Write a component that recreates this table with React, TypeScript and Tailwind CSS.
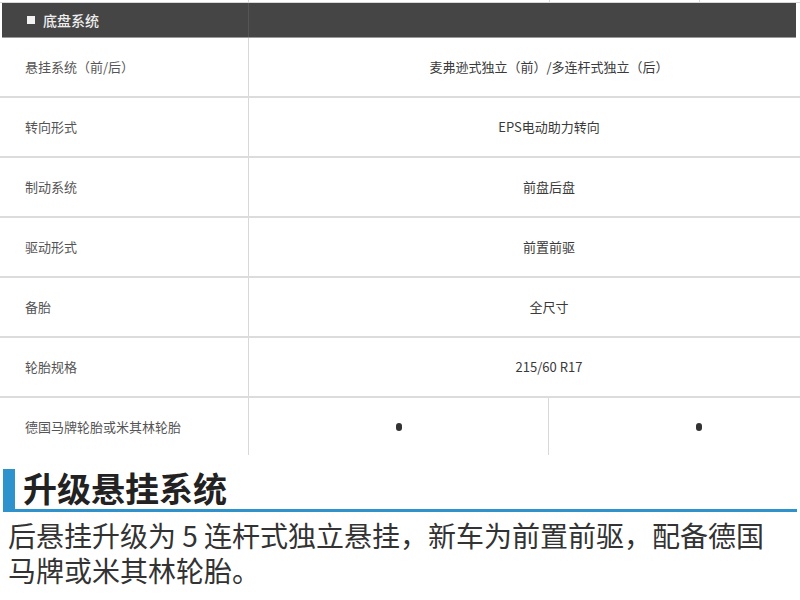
const rows: [string, string][] = [
  ["悬挂系统（前/后）", "麦弗逊式独立（前）/多连杆式独立（后）"],
  ["转向形式", "EPS电动助力转向"],
  ["制动系统", "前盘后盘"],
  ["驱动形式", "前置前驱"],
  ["备胎", "全尺寸"],
  ["轮胎规格", "215/60 R17"],
]

const cjk = { fontFamily: '"Noto Sans CJK SC", "Noto Sans", sans-serif' }

export default function App() {
  return (
    <div className="w-[800px] h-[600px] bg-white overflow-hidden" style={cjk}>
      <div className="w-[850px]">
        {/* strip left over from the previous table */}
        <div className="flex h-[3px] border-b border-[#d8d8d8]">
          <div className="w-[249px] border-r border-[#d8d8d8]" />
          <div className="w-[301px] border-r border-[#d8d8d8]" />
          <div className="w-[150px] border-r border-[#d8d8d8]" />
        </div>

        <div className="flex items-center h-[35px] bg-[#454545] ml-[2px] w-[794px] border-b border-[#9a9a9a]">
          <div className="flex items-center w-[247px] h-full border-r border-[#555] pl-[25px] gap-[8px]">
            <span className="w-[8px] h-[8px] bg-[#f2f2f2]" />
            <span className="text-[14px] text-[#eeeeee] font-medium">底盘系统</span>
          </div>
        </div>

        {rows.map(([k, v]) => (
          <div key={k} className="flex h-[60px] border-b-2 border-[#dcdcdc]">
            <div className="w-[249px] flex items-center pl-[25px] border-r border-[#d8d8d8] text-[13px] text-[#555]">
              {k}
            </div>
            <div className="w-[600px] flex items-center justify-center text-[13px] text-[#3a3a3a]">
              {v}
            </div>
          </div>
        ))}

        <div className="flex h-[57px]">
          <div className="w-[249px] flex items-center pl-[25px] border-r border-[#d8d8d8] text-[13px] text-[#555]">
            德国马牌轮胎或米其林轮胎
          </div>
          <div className="w-[300px] flex items-center justify-center border-r border-[#d8d8d8]">
            <span className="w-[6px] h-[8px] rounded-full bg-[#333]" />
          </div>
          <div className="w-[300px] flex items-center justify-center">
            <span className="w-[6px] h-[8px] rounded-full bg-[#333]" />
          </div>
        </div>
      </div>

      <div className="mt-[14px] ml-[3px] w-[794px] flex items-end h-[43px] border-b-[3px] border-[#2e93cc]">
        <div className="w-[12px] h-full bg-[#2e93cc]" />
        <div className="pl-[8px] text-[34px] leading-[42px] font-bold text-[#222]">升级悬挂系统</div>
      </div>

      <p className="px-[8px] pt-[6px] text-[28px] leading-[35px] text-[#333]">
        后悬挂升级为 5 连杆式独立悬挂，新车为前置前驱，配备德国马牌或米其林轮胎。
      </p>
    </div>
  )
}
